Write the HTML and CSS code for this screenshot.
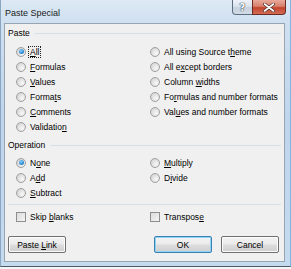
FILE: index.html
```html
<!DOCTYPE html>
<html>
<head>
<meta charset="utf-8">
<link rel="stylesheet" href="styles.css">
</head>
<body>
<div class="window">
  <div class="titlebar">
    <span class="title">Paste Special</span>
    <div class="caption-btns">
      <div class="cbtn help">?</div>
      <div class="cbtn close">
        <svg width="12" height="9" viewBox="0 0 12 9"><path d="M1.5 1 L10.5 8 M10.5 1 L1.5 8" stroke="#4a3030" stroke-width="3" stroke-linecap="round"/><path d="M1.5 1 L10.5 8 M10.5 1 L1.5 8" stroke="#ffffff" stroke-width="1.6" stroke-linecap="round"/></svg>
      </div>
    </div>
  </div>
  <div class="client">
    <div class="group-head"><span>Paste</span><i class="rule"></i></div>
    <div class="grid paste-grid">
      <label class="opt"><i class="radio on"></i><span class="focus"><u>A</u>ll</span></label>
      <label class="opt"><i class="radio"></i><span>All using Source t<u>h</u>eme</span></label>
      <label class="opt"><i class="radio"></i><span><u>F</u>ormulas</span></label>
      <label class="opt"><i class="radio"></i><span>All e<u>x</u>cept borders</span></label>
      <label class="opt"><i class="radio"></i><span><u>V</u>alues</span></label>
      <label class="opt"><i class="radio"></i><span>Column <u>w</u>idths</span></label>
      <label class="opt"><i class="radio"></i><span>Forma<u>t</u>s</span></label>
      <label class="opt"><i class="radio"></i><span>Fo<u>r</u>mulas and number formats</span></label>
      <label class="opt"><i class="radio"></i><span><u>C</u>omments</span></label>
      <label class="opt"><i class="radio"></i><span>Val<u>u</u>es and number formats</span></label>
      <label class="opt"><i class="radio"></i><span>Validatio<u>n</u></span></label>
      <span></span>
    </div>
    <div class="group-head op-head"><span>Operation</span><i class="rule"></i></div>
    <div class="grid op-grid">
      <label class="opt"><i class="radio on"></i><span>N<u>o</u>ne</span></label>
      <label class="opt"><i class="radio"></i><span><u>M</u>ultiply</span></label>
      <label class="opt"><i class="radio"></i><span>A<u>d</u>d</span></label>
      <label class="opt"><i class="radio"></i><span>D<u>i</u>vide</span></label>
      <label class="opt"><i class="radio"></i><span><u>S</u>ubtract</span></label>
      <span></span>
    </div>
    <div class="sep"></div>
    <div class="grid checks">
      <label class="opt"><i class="check"></i><span>Skip <u>b</u>lanks</span></label>
      <label class="opt"><i class="check"></i><span>Transpos<u>e</u></span></label>
    </div>
    <div class="buttons">
      <button class="btn">Paste <u>L</u>ink</button>
      <span class="spacer"></span>
      <button class="btn default">OK</button>
      <button class="btn">Cancel</button>
    </div>
  </div>
</div>
</body>
</html>
```

FILE: styles.css
```css
* { box-sizing: border-box; }
html, body { margin: 0; padding: 0; }
body {
  width: 291px;
  height: 269px;
  background: #f4f6f8;
  font-family: "Liberation Sans", Arial, sans-serif;
  font-size: 8.5px;
  color: #000;
  overflow: hidden;
}
.window {
  width: 291px;
  height: 267px;
  background: linear-gradient(to bottom, #dde9f5 0px, #cfe0f0 23px, #bed5ec 120px, #c4daef 267px);
  border-left: 1px solid #8aa6c2;
  border-right: 1px solid #7fb6e6;
  border-bottom: 1px solid #4d5a66;
  padding: 0 5px 4px 3px;
  display: flex;
  flex-direction: column;
}
.titlebar {
  height: 23px;
  display: flex;
  justify-content: space-between;
  align-items: flex-start;
}
.title {
  font-size: 9px;
  margin-top: 8px;
  margin-left: 1px;
  color: #1a1a1a;
}
.caption-btns {
  display: flex;
  margin-right: -1px;
}
.cbtn {
  height: 15px;
  border: 1px solid #5e6e82;
  border-top: none;
  display: flex;
  align-items: center;
  justify-content: center;
}
.help {
  width: 20px;
  border-right: none;
  border-radius: 0 0 0 4px;
  background: linear-gradient(to bottom, #eef2f7 0%, #dbe3ec 45%, #c5d1de 55%, #d2dce7 100%);
  color: #fff;
  font-family: "DejaVu Sans", sans-serif;
  font-weight: bold;
  font-size: 10px;
  text-shadow: 0 0 1px #3a4656, 0 0 1px #3a4656, 0 0 1px #3a4656;
}
.close {
  width: 34px;
  border-radius: 0 0 4px 0;
  border-color: #6b2a22;
  background: linear-gradient(to bottom, #e8a99b 0%, #d7806c 45%, #c4432d 55%, #d26c55 100%);
}
.client {
  flex: 1;
  background: #f0f0f0;
  border: 1px solid #98a4b0;
  display: flex;
  flex-direction: column;
  padding: 0 3px 0 3px;
}
.group-head {
  height: 12px;
  margin-top: 3px;
  display: flex;
  align-items: center;
  gap: 5px;
}
.rule {
  flex: 1;
  height: 1px;
  background: #d5dfe5;
  margin-top: 1px;
}
.op-head { margin-top: 5px; }
.grid {
  display: grid;
  grid-template-columns: 134px 1fr;
  padding-left: 8px;
}
.paste-grid { margin-top: 5px; }
.op-grid { margin-top: 4px; }
.opt {
  height: 15px;
  display: flex;
  align-items: center;
  gap: 4px;
}
.opt u { text-decoration: underline; text-underline-offset: 1px; }
.radio {
  width: 10px;
  height: 10px;
  border-radius: 50%;
  border: 1px solid #a0a0a0;
  background: radial-gradient(circle at 65% 65%, #f8f8f8 0%, #e2e2e2 50%, #c8c8c8 100%);
  position: relative;
  flex: none;
}
.radio.on::after {
  content: "";
  position: absolute;
  left: 1.5px;
  top: 1.5px;
  width: 5px;
  height: 5px;
  border-radius: 50%;
  background: radial-gradient(circle at 40% 35%, #8fd0f5 0%, #2a8ad4 60%, #1c5e9c 100%);
}
.focus {
  outline: 1px dotted #222;
  outline-offset: 0px;
  padding: 0 1px;
  margin-left: -1px;
}
.sep {
  height: 1px;
  background: #d5dfe5;
  margin: 4px 0 4px 0;
}
.checks { margin-top: 0; }
.check {
  width: 10px;
  height: 10px;
  border: 1px solid #8f8f8f;
  background: linear-gradient(135deg, #dcdcdc 0%, #f4f4f4 100%);
  flex: none;
}
.buttons {
  display: flex;
  margin-top: 12px;
  padding-right: 2px;
  gap: 9px;
}
.spacer { flex: 1; }
.btn {
  width: 58px;
  height: 17px;
  padding: 0;
  font-family: "Liberation Sans", Arial, sans-serif;
  font-size: 8.5px;
  color: #000;
  border: 1px solid #707070;
  border-radius: 2px;
  background: linear-gradient(to bottom, #f3f3f3 0%, #ebebeb 48%, #dddddd 52%, #cfcfcf 100%);
  box-shadow: inset 0 0 0 1px #fcfcfc;
}
.btn.default {
  border-color: #3c7fb1;
  box-shadow: inset 0 0 0 1px #8fd3f5;
}
```
